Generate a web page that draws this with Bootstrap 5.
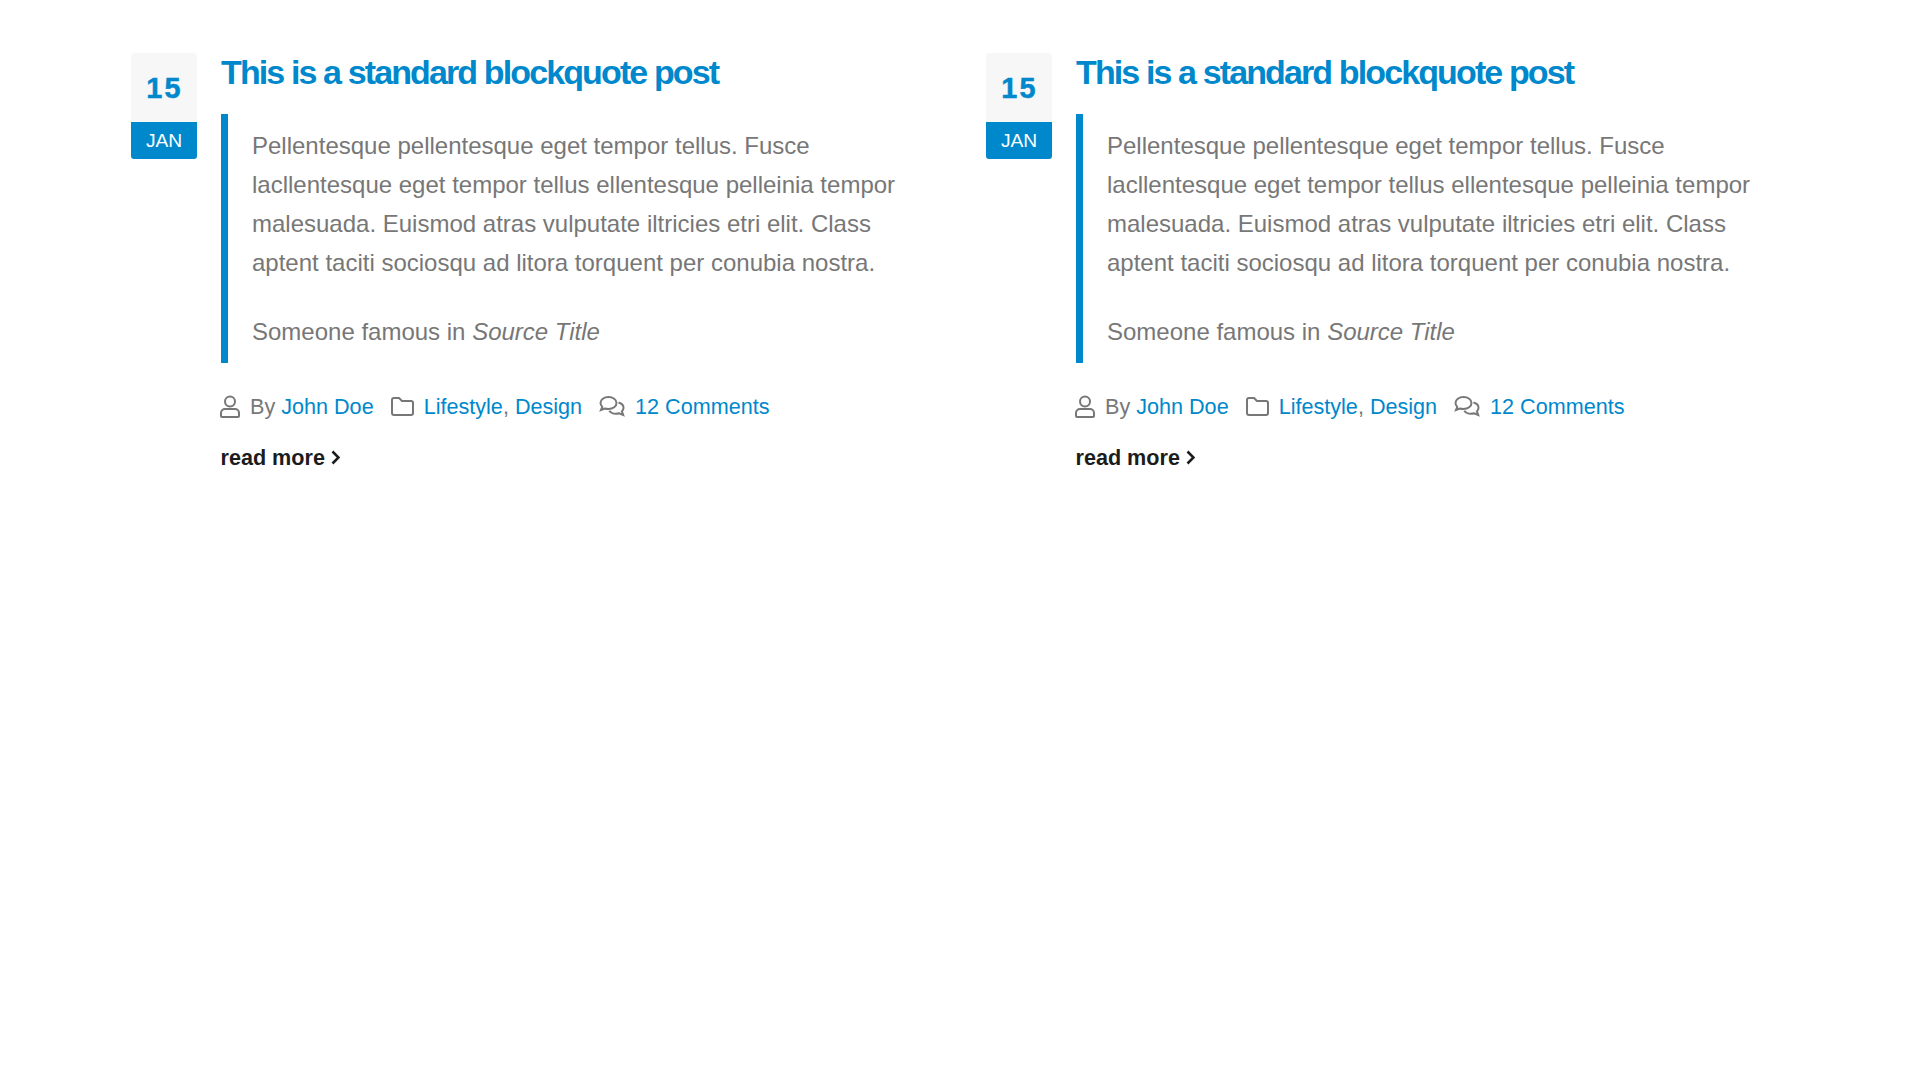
<!DOCTYPE html>
<html lang="en">
<head>
<meta charset="utf-8">
<title>Blog</title>
<link rel="stylesheet" href="https://cdn.jsdelivr.net/npm/bootstrap@5.3.0/dist/css/bootstrap.min.css">
<script src="https://cdn.jsdelivr.net/npm/bootstrap@5.3.0/dist/js/bootstrap.bundle.min.js"></script>
<style>
body { font-family: "Liberation Sans", Arial, sans-serif; color: #777; background: #fff; }
.post-grid { padding: 53px 0 0 131px; display: grid; grid-template-columns: repeat(2, 855px); }
.post-item { display: flex; gap: 24px; padding-right: 60px; }
.date-box { width: 66px; flex: none; height: 106px; border-radius: 3px; overflow: hidden; text-align: center; }
.date-day { height: 69px; background: #f7f7f7; color: #0088cc; font-size: 28.8px; font-weight: 700; line-height: 71px; letter-spacing: 2.2px; padding-left: 1px; -webkit-text-stroke: .5px #0088cc; }
.date-mon { height: 37px; background: #0088cc; color: #fff; font-size: 19.2px; line-height: 37px; }
.post-body { flex: 1 1 auto; min-width: 0; }
.post-title { font-size: 34px; font-weight: 700; letter-spacing: -1.88px; line-height: 39px; color: #0088cc; margin: 0 0 21.5px; }
.post-quote { border-left: 7px solid #0088cc; padding: 12px 0 11px 24px; font-size: 24px; line-height: 39.2px; margin: 0 0 27px; }
.post-quote p { margin: 0 0 30px; }
.post-source { font-size: 24px; }
.post-meta { font-size: 21.6px; line-height: 34px; display: flex; align-items: center; margin-bottom: 18px; }
.post-meta a, .post-title a { color: #0088cc; text-decoration: none; }
.post-meta svg { flex: none; margin-left: -1px; margin-right: 10px; }
.meta-part { margin-right: 18px; display: flex; align-items: center; white-space: pre; }
.read-link { font-size: 21.6px; font-weight: 700; color: #1c1c1c; text-decoration: none; display: inline-flex; align-items: center; gap: 6px; margin-left: -.5px; }
</style>
</head>
<body>
<div class="post-grid">
  <article class="post-item">
    <div class="date-box"><div class="date-day">15</div><div class="date-mon">JAN</div></div>
    <div class="post-body">
      <h2 class="post-title"><a href="#">This is a standard blockquote post</a></h2>
      <blockquote class="post-quote">
        <p>Pellentesque pellentesque eget tempor tellus. Fusce lacllentesque eget tempor tellus ellentesque pelleinia tempor malesuada. Euismod atras vulputate iltricies etri elit. Class aptent taciti sociosqu ad litora torquent per conubia nostra.</p>
        <footer class="post-source">Someone famous in <cite>Source Title</cite></footer>
      </blockquote>
      <div class="post-meta">
        <span class="meta-part"><svg width="20" height="23" viewBox="0 0 20 23" fill="none" stroke="#777" stroke-width="2"><circle cx="10" cy="6.500" r="5"/><path d="M5 14h10a4 4 0 0 1 4 4v3a1 1 0 0 1-1 1H2a1 1 0 0 1-1-1v-3a4 4 0 0 1 4-4z"/></svg>By <a href="#">John Doe</a></span>
        <span class="meta-part"><svg width="23" height="19" viewBox="0 0 23 19" fill="none" stroke="#777" stroke-width="2"><path d="M1 3a2 2 0 0 1 2-2h5l3 3h9a2 2 0 0 1 2 2v10a2 2 0 0 1-2 2H3a2 2 0 0 1-2-2z"/></svg><a href="#">Lifestyle</a>, <a href="#">Design</a></span>
        <span class="meta-part"><svg width="26" height="21" viewBox="0 0 26 21" fill="none" stroke="#777" stroke-width="2"><path d="M9.500 1C5 1 1.500 3.500 1.500 7c0 1.500.7 2.800 1.800 3.900L2 14l4-1.500c1.100.4 2.300.5 3.500.5 4.500 0 8-2.500 8-6s-3.500-6-8-6z"/><path d="M19.500 6.500c3 .8 5 2.800 5 5.300 0 1.400-.6 2.600-1.600 3.600l1.300 3.600-4.200-1.700c-1 .3-2 .5-3 .5-3 0-5.500-1.200-6.700-3"/></svg><a href="#">12 Comments</a></span>
      </div>
      <a class="read-link" href="#">read more <svg width="9" height="15" viewBox="0 0 9 15" fill="none" stroke="#1c1c1c" stroke-width="2.600"><path d="M1.500 1.500l6 6-6 6"/></svg></a>
    </div>
  </article>
  <article class="post-item">
    <div class="date-box"><div class="date-day">15</div><div class="date-mon">JAN</div></div>
    <div class="post-body">
      <h2 class="post-title"><a href="#">This is a standard blockquote post</a></h2>
      <blockquote class="post-quote">
        <p>Pellentesque pellentesque eget tempor tellus. Fusce lacllentesque eget tempor tellus ellentesque pelleinia tempor malesuada. Euismod atras vulputate iltricies etri elit. Class aptent taciti sociosqu ad litora torquent per conubia nostra.</p>
        <footer class="post-source">Someone famous in <cite>Source Title</cite></footer>
      </blockquote>
      <div class="post-meta">
        <span class="meta-part"><svg width="20" height="23" viewBox="0 0 20 23" fill="none" stroke="#777" stroke-width="2"><circle cx="10" cy="6.500" r="5"/><path d="M5 14h10a4 4 0 0 1 4 4v3a1 1 0 0 1-1 1H2a1 1 0 0 1-1-1v-3a4 4 0 0 1 4-4z"/></svg>By <a href="#">John Doe</a></span>
        <span class="meta-part"><svg width="23" height="19" viewBox="0 0 23 19" fill="none" stroke="#777" stroke-width="2"><path d="M1 3a2 2 0 0 1 2-2h5l3 3h9a2 2 0 0 1 2 2v10a2 2 0 0 1-2 2H3a2 2 0 0 1-2-2z"/></svg><a href="#">Lifestyle</a>, <a href="#">Design</a></span>
        <span class="meta-part"><svg width="26" height="21" viewBox="0 0 26 21" fill="none" stroke="#777" stroke-width="2"><path d="M9.500 1C5 1 1.500 3.500 1.500 7c0 1.500.7 2.800 1.800 3.900L2 14l4-1.500c1.100.4 2.300.5 3.500.5 4.500 0 8-2.500 8-6s-3.500-6-8-6z"/><path d="M19.500 6.500c3 .8 5 2.800 5 5.300 0 1.400-.6 2.600-1.600 3.600l1.300 3.600-4.200-1.700c-1 .3-2 .5-3 .5-3 0-5.500-1.200-6.700-3"/></svg><a href="#">12 Comments</a></span>
      </div>
      <a class="read-link" href="#">read more <svg width="9" height="15" viewBox="0 0 9 15" fill="none" stroke="#1c1c1c" stroke-width="2.600"><path d="M1.500 1.500l6 6-6 6"/></svg></a>
    </div>
  </article>
</div>
</body>
</html>
